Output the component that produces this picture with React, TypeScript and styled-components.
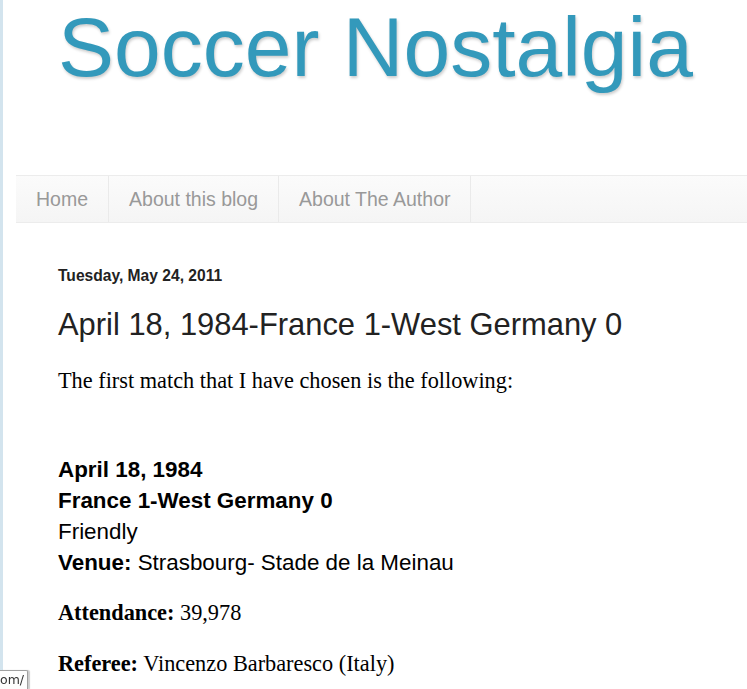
import React from "react";
import styled, { createGlobalStyle } from "styled-components";

const Global = createGlobalStyle`
  html, body { margin: 0; padding: 0; background: #fff; }
  body { font-family: "Liberation Sans", Arial, sans-serif; }
`;

const Page = styled.div`
  min-height: 689px;
  border-left: 3px solid #d3e4ee;
  background: #fff;
  overflow: hidden;
`;

const Header = styled.header`
  height: 175px;
  padding-left: 55px;
  box-sizing: border-box;
`;

const Title = styled.h1`
  margin: 0;
  padding-top: 5px;
  font-family: "Liberation Sans", Arial, sans-serif;
  font-weight: normal;
  font-size: 84px;
  line-height: 84px;
  color: #3399bb;
  text-shadow: 1px 2px 3px rgba(0, 0, 0, 0.2);
  white-space: nowrap;
`;

const Nav = styled.nav`
  margin-left: 13px;
  display: flex;
  height: 48px;
  box-sizing: border-box;
  border-top: 1px solid #ececec;
  border-bottom: 1px solid #ececec;
  background: linear-gradient(#fbfbfb, #f5f5f5);
`;

const Tab = styled.a<{ $first?: boolean; $last?: boolean }>`
  display: block;
  padding: 0 20px;
  line-height: 46px;
  font-family: "Liberation Sans", Arial, sans-serif;
  font-size: 19.5px;
  color: #999;
  text-decoration: none;
  border-left: ${(p) => (p.$first ? "none" : "1px solid #eaeaea")};
  border-right: ${(p) => (p.$last ? "1px solid #eaeaea" : "none")};
`;

const Main = styled.main`
  padding-left: 55px;
  padding-top: 44px;
`;

const DateHeader = styled.h2`
  margin: 0;
  font-family: "Liberation Sans", Arial, sans-serif;
  font-weight: bold;
  font-size: 15.6px;
  line-height: 18px;
  color: #222;
`;

const PostTitle = styled.h3`
  margin: 22px 0 0;
  font-family: "Liberation Sans", Arial, sans-serif;
  font-weight: normal;
  font-size: 30.9px;
  line-height: 36px;
  color: #222;
`;

const SerifPara = styled.p<{ $gap: number }>`
  margin: ${(p) => p.$gap}px 0 0;
  font-family: "Liberation Serif", "Times New Roman", serif;
  font-size: 22.3px;
  line-height: 25px;
  color: #000;
`;

const MatchBlock = styled.div`
  margin-top: 61px;
  font-family: "Liberation Sans", Arial, sans-serif;
  font-size: 22.4px;
  line-height: 31px;
  color: #000;
`;

const Line = styled.div``;

const Status = styled.div`
  position: fixed;
  left: 0;
  bottom: 0;
  width: 28px;
  height: 19px;
  box-sizing: border-box;
  padding-left: 0;
  background: #fdfdfd;
  border: 1px solid #a0a0a0;
  border-left: none;
  border-bottom: none;
  border-top-right-radius: 2px;
  box-shadow: 2px 0 1px rgba(0, 0, 0, 0.2);
  font-family: "DejaVu Sans", "Liberation Sans", sans-serif;
  font-size: 12.5px;
  line-height: 18px;
  color: #333;
  overflow: hidden;
  white-space: nowrap;
`;

export default function App() {
  return (
    <>
      <Global />
      <Page>
        <Header>
          <Title>Soccer Nostalgia</Title>
        </Header>
        <Nav>
          <Tab href="#" $first>Home</Tab>
          <Tab href="#">About this blog</Tab>
          <Tab href="#" $last>About The Author</Tab>
        </Nav>
        <Main>
          <DateHeader>Tuesday, May 24, 2011</DateHeader>
          <PostTitle>April 18, 1984-France 1-West Germany 0</PostTitle>
          <SerifPara $gap={25}>The first match that I have chosen is the following:</SerifPara>
          <MatchBlock>
            <Line><b>April 18, 1984</b></Line>
            <Line><b>France 1-West Germany 0</b></Line>
            <Line>Friendly</Line>
            <Line><b>Venue:</b> Strasbourg- Stade de la Meinau</Line>
          </MatchBlock>
          <SerifPara $gap={22}><b>Attendance:</b> 39,978</SerifPara>
          <SerifPara $gap={26}><b>Referee:</b> Vincenzo Barbaresco (Italy)</SerifPara>
        </Main>
      </Page>
      <Status>om/</Status>
    </>
  );
}
